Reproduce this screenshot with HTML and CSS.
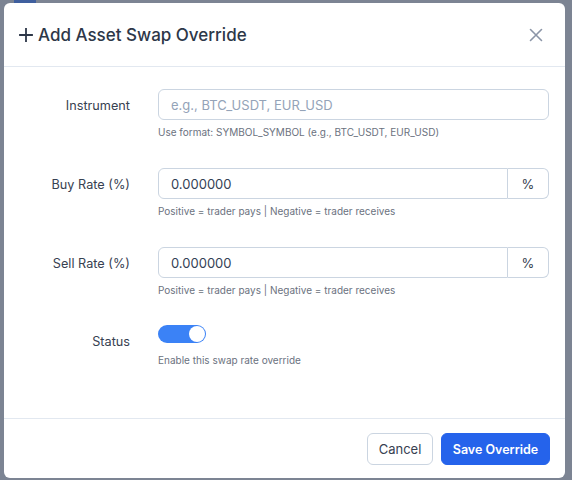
FILE: index.html
```html
<!DOCTYPE html>
<html lang="en">
<head>
<meta charset="utf-8">
<title>Add Asset Swap Override</title>
<link rel="stylesheet" href="styles.css">
</head>
<body>
<div class="backdrop">
  <div class="peek"></div>
  <div class="modal">
    <div class="modal-header">
      <h2 class="modal-title">
        <svg class="plus" width="14" height="14" viewBox="0 0 14 14"><path d="M7 1v12M1 7h12" stroke="#2d3748" stroke-width="1.8" stroke-linecap="square"/></svg>
        Add Asset Swap Override
      </h2>
      <button class="close" aria-label="Close">
        <svg width="14" height="14" viewBox="0 0 14 14"><path d="M1.5 1.5l11 11M12.5 1.5l-11 11" stroke="#8b95a7" stroke-width="1.6" stroke-linecap="round"/></svg>
      </button>
    </div>
    <div class="modal-body">
      <div class="row">
        <label class="label">Instrument</label>
        <div class="control">
          <input class="input" type="text" placeholder="e.g., BTC_USDT, EUR_USD">
          <div class="help">Use format: SYMBOL_SYMBOL (e.g., BTC_USDT, EUR_USD)</div>
        </div>
      </div>
      <div class="row">
        <label class="label">Buy Rate (%)</label>
        <div class="control">
          <div class="group">
            <input class="input grouped" type="text" value="0.000000">
            <span class="addon">%</span>
          </div>
          <div class="help">Positive = trader pays | Negative = trader receives</div>
        </div>
      </div>
      <div class="row row-sell">
        <label class="label">Sell Rate (%)</label>
        <div class="control">
          <div class="group">
            <input class="input grouped" type="text" value="0.000000">
            <span class="addon">%</span>
          </div>
          <div class="help">Positive = trader pays | Negative = trader receives</div>
        </div>
      </div>
      <div class="row">
        <label class="label">Status</label>
        <div class="control">
          <span class="toggle"><span class="thumb"></span></span>
          <div class="help help-toggle">Enable this swap rate override</div>
        </div>
      </div>
    </div>
    <div class="modal-footer">
      <button class="btn btn-cancel">Cancel</button>
      <button class="btn btn-primary">Save Override</button>
    </div>
  </div>
</div>
</body>
</html>
```

FILE: styles.css
```css
* { box-sizing: border-box; }
html, body { margin: 0; padding: 0; }
body {
  font-family: Inter, "Noto Sans", sans-serif;
  color: #374151;
  width: 572px;
  height: 480px;
  overflow: hidden;
}
.backdrop {
  position: relative;
  width: 572px;
  height: 480px;
  background: #7c8493;
  padding: 3px 7px 0 4px;
}
.peek {
  position: absolute;
  left: 14px;
  top: 0;
  width: 22px;
  height: 4px;
  background: #3f5f9e;
}
.modal {
  position: relative;
  background: #ffffff;
  border-radius: 6px;
  height: 475px;
  display: flex;
  flex-direction: column;
}
.modal-header {
  height: 64px;
  border-bottom: 1px solid #e2e8f0;
  display: flex;
  align-items: center;
  justify-content: space-between;
  padding: 0 22px 0 15px;
}
.modal-title {
  margin: 0;
  font-size: 17px;
  font-weight: 500;
  color: #2d3748;
  display: flex;
  align-items: center;
  gap: 5px;
}
.plus { display: block; }
.close {
  border: 0;
  background: none;
  padding: 0;
  width: 14px;
  height: 14px;
  cursor: pointer;
}
.close svg { display: block; }
.modal-body {
  flex: 1;
  padding: 22px 16px 0 16px;
}
.row {
  display: grid;
  grid-template-columns: 110px 1fr;
  column-gap: 28px;
  margin-bottom: 29px;
}
.row-sell { margin-top: 1px; margin-bottom: 28px; }
.label {
  height: 31px;
  display: flex;
  align-items: center;
  justify-content: flex-end;
  font-size: 12.7px;
  color: #374151;
  padding-top: 1px;
}
.control { min-width: 0; }
.input {
  display: block;
  width: 100%;
  height: 31px;
  border: 1px solid #cbd5e1;
  border-radius: 6px;
  padding: 0 12px;
  font-family: Inter, "Noto Sans", sans-serif;
  font-size: 13px;
  color: #334155;
  background: #fff;
  outline: none;
}
.input::placeholder { color: #94a3b8; }
.group { display: flex; }
.grouped {
  flex: 1;
  border-radius: 6px 0 0 6px;
}
.addon {
  width: 41px;
  height: 31px;
  border: 1px solid #cbd5e1;
  border-left: 0;
  border-radius: 0 6px 6px 0;
  display: flex;
  align-items: center;
  justify-content: center;
  font-size: 13px;
  color: #374151;
}
.help {
  margin-top: 5px;
  font-size: 10px;
  line-height: 14px;
  color: #6b7280;
}
.help-toggle { margin-top: 10px; }
.toggle {
  display: block;
  width: 48px;
  height: 18px;
  border-radius: 9px;
  background: #3b82f6;
  position: relative;
}
.thumb {
  position: absolute;
  right: 1px;
  top: 1px;
  width: 16px;
  height: 16px;
  border-radius: 50%;
  background: #fff;
}
.modal-footer {
  height: 60px;
  border-top: 1px solid #e2e8f0;
  display: flex;
  justify-content: flex-end;
  align-items: flex-start;
  gap: 8px;
  padding: 14px 15px 0 0;
}
.btn {
  height: 32px;
  border-radius: 6px;
  font-family: Inter, "Noto Sans", sans-serif;
  font-size: 13px;
  padding: 0;
  white-space: nowrap;
  cursor: pointer;
}
.btn-cancel {
  width: 66px;
  background: #fff;
  border: 1px solid #cbd5e1;
  color: #374151;
  font-weight: 400;
}
.btn-primary {
  width: 109px;
  background: #2563eb;
  border: 1px solid #2563eb;
  color: #fff;
  font-size: 12.5px;
  font-weight: 600;
}
```
